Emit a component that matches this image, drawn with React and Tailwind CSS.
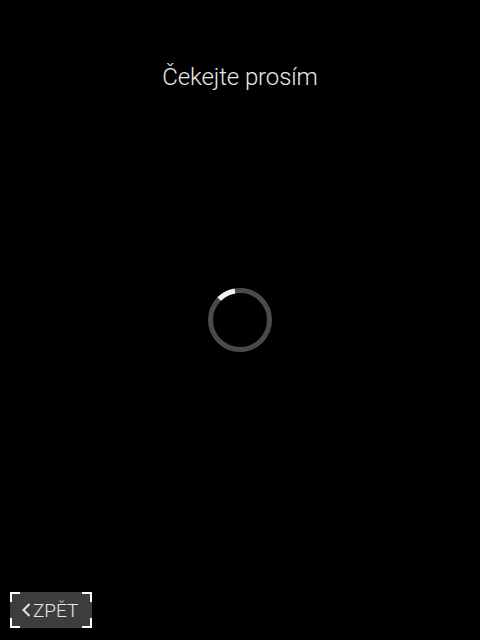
import React from "react";

const font = { fontFamily: "Roboto, 'Open Sans', sans-serif" };

const Corner = ({ className }) => (
  <span className={`absolute w-[10px] h-[10px] border-white ${className}`} />
);

const Spinner = () => (
  <svg width="66" height="66" viewBox="0 0 66 66">
    <circle cx="33" cy="33" r="29.5" fill="none" stroke="#4a4a4a" strokeWidth="5" />
    <path
      d="M 27.9 3.95 A 29.5 29.5 0 0 0 12.1 12.1"
      fill="none"
      stroke="#f2f2f2"
      strokeWidth="5"
    />
  </svg>
);

export default function App() {
  return (
    <div className="w-[480px] h-[640px] bg-black flex flex-col text-[#e8e8e8]" style={font}>
      {/* Title */}
      <h1 className="pt-[61px] text-center text-[24px] font-light tracking-[-0.1px] leading-[32px]">
        Čekejte prosím
      </h1>

      {/* Spinner */}
      <div className="flex-1 flex items-center justify-center pb-[46px]">
        <Spinner />
      </div>

      {/* Back button */}
      <div className="px-[10px] pb-[12px]">
        <button className="relative w-[82px] h-[36px] bg-[#3d3d3d] flex items-center pl-[12px] gap-[2px] text-[19px] font-light text-[#e6e6e6]">
          <Corner className="top-0 left-0 border-t-2 border-l-2" />
          <Corner className="top-0 right-0 border-t-2 border-r-2" />
          <Corner className="bottom-0 left-0 border-b-2 border-l-2" />
          <Corner className="bottom-0 right-0 border-b-2 border-r-2" />
          <svg width="9" height="14" viewBox="0 0 9 14">
            <path d="M7.5 1 L1.5 7 L7.5 13" fill="none" stroke="#e6e6e6" strokeWidth="2" />
          </svg>
          <span className="leading-none">ZPĚT</span>
        </button>
      </div>
    </div>
  );
}
